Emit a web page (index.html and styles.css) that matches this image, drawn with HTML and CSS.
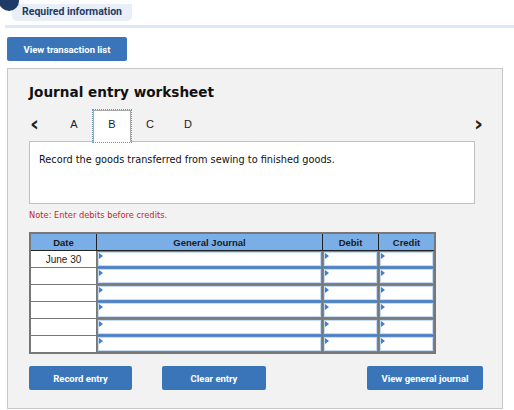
FILE: index.html
```html
<!DOCTYPE html>
<html lang="en">
<head>
    <meta charset="UTF-8">
    <title>Journal entry worksheet</title>
    <link rel="stylesheet" href="styles.css">
</head>
<body>

    <div class="req-bar">
        <span class="req-dot"></span>
        <span class="req-label">Required information</span>
    </div>
    <div class="sep"></div>

    <button class="btn btn-list">View transaction list</button>

    <div class="panel">
        <h2>Journal entry worksheet</h2>

        <!-- tabs -->
        <div class="tabs">
            <span class="arrow">&lsaquo;</span>
            <span class="tab">A</span>
            <span class="tab active">B</span>
            <span class="tab">C</span>
            <span class="tab">D</span>
            <span class="arrow next">&rsaquo;</span>
        </div>

        <div class="task-box">
            Record the goods transferred from sewing to finished goods.
        </div>

        <div class="note">Note: Enter debits before credits.</div>

        <table class="journal">
            <thead>
                <tr>
                    <th class="c-date">Date</th>
                    <th class="c-gj">General Journal</th>
                    <th class="c-dr">Debit</th>
                    <th class="c-cr">Credit</th>
                </tr>
            </thead>
            <tbody>
                <tr><td class="date">June 30</td><td><div class="inp"></div></td><td><div class="inp"></div></td><td><div class="inp"></div></td></tr>
                <tr><td class="date"></td><td><div class="inp"></div></td><td><div class="inp"></div></td><td><div class="inp"></div></td></tr>
                <tr><td class="date"></td><td><div class="inp"></div></td><td><div class="inp"></div></td><td><div class="inp"></div></td></tr>
                <tr><td class="date"></td><td><div class="inp"></div></td><td><div class="inp"></div></td><td><div class="inp"></div></td></tr>
                <tr><td class="date"></td><td><div class="inp"></div></td><td><div class="inp"></div></td><td><div class="inp"></div></td></tr>
                <tr><td class="date"></td><td><div class="inp"></div></td><td><div class="inp"></div></td><td><div class="inp"></div></td></tr>
            </tbody>
        </table>

        <div class="actions">
            <button class="btn btn-record">Record entry</button>
            <button class="btn btn-clear">Clear entry</button>
            <button class="btn btn-view">View general journal</button>
        </div>
    </div>

</body>
</html>
```

FILE: styles.css
```css
body {
    margin: 0;
    padding: 0;
    background-color: #fff;
    font-family: "DejaVu Sans", Verdana, sans-serif;
    color: #222;
    overflow: hidden;
}

/* top badge */
.req-bar {
    position: relative;
    height: 17px;
}

.req-dot {
    position: absolute;
    left: -1px;
    top: -9px;
    width: 20px;
    height: 20px;
    border-radius: 50%;
    background-color: #1d3b66;
}

.req-label {
    display: inline-block;
    margin-left: 12px;
    height: 17px;
    padding: 0 10px;
    line-height: 15px;
    background-color: #e9eff8;
    border-radius: 0 0 5px 5px;
    font-family: Roboto, sans-serif;
    font-size: 10.5px;
    font-weight: bold;
    color: #1d3b66;
}

.sep {
    margin: 8px 0 0 5px;
    height: 3px;
    background-color: #dde9f6;
}

.btn {
    display: block;
    height: 24px;
    border: none;
    border-radius: 2px;
    background-color: #3a75b9;
    color: #fff;
    font-family: Roboto, sans-serif;
    font-size: 9.5px;
    font-weight: bold;
    padding: 0;
    cursor: pointer;
}

.btn-list {
    margin: 9px 0 0 7px;
    width: 120px;
}

.panel {
    margin: 7px 0 0 7px;
    width: 496px;
    height: 341px;
    box-sizing: border-box;
    background-color: #f2f2f2;
    border: 1px solid #c8c8c8;
    padding: 15px 0 0 21px;
}

.panel h2 {
    margin: 0;
    font-size: 13.6px;
    line-height: 17px;
    font-weight: bold;
    color: #111;
}

.tabs {
    display: flex;
    align-items: stretch;
    height: 32px;
    margin-top: 9px;
    width: 456px;
}

.arrow {
    width: 26px;
    font-size: 22px;
    font-weight: bold;
    line-height: 27px;
    padding-left: 1px;
    box-sizing: border-box;
}

.arrow.next {
    margin-left: auto;
    width: 12px;
}

.tab {
    width: 38px;
    text-align: center;
    font-family: "Liberation Sans", Arial, sans-serif;
    font-size: 11px;
    line-height: 28px;
    box-sizing: border-box;
}

.tab.active {
    position: relative;
    z-index: 1;
    background-color: #fff;
    border: 1px solid #a9a9a9;
    border-bottom: none;
    outline: 1px dotted #6b96d0;
    height: 32px;
    line-height: 27px;
}

.task-box {
    margin-top: -1px;
    width: 446px;
    height: 63px;
    box-sizing: border-box;
    background-color: #fff;
    border: 1px solid #c0c0c0;
    padding: 12px 0 0 9px;
    font-size: 9.75px;
    line-height: 12px;
    color: #111;
}

.note {
    margin-top: 6px;
    font-size: 8.3px;
    line-height: 11px;
    color: #c8262d;
}

.journal {
    margin-top: 11px;
    border-collapse: collapse;
    width: 407px;
    font-family: "Liberation Sans", Arial, sans-serif;
    font-size: 10px;
    border: 2px solid #777;
}

.journal th {
    height: 16px;
    padding: 0;
    background-color: #7aaee6;
    border: 1px solid #222;
    border-top: 2px solid #777;
    font-weight: bold;
    font-size: 9.5px;
    color: #1a1a1a;
}

.journal th.c-date { width: 65px; border-left-color: #777; }
.journal th.c-gj { width: 225px; }
.journal th.c-dr { width: 55px; }
.journal th.c-cr { border-right-color: #777; }

.journal td {
    height: 16px;
    padding: 0;
    border: 1px solid #777;
    background-color: #fff;
}

.journal td.date {
    text-align: center;
}

.inp {
    position: relative;
    height: 14px;
    border: 1px solid #5a8cca;
    box-shadow: inset 0 0 0 1px #c6dbf2;
}

.inp::before {
    content: "";
    position: absolute;
    left: 1px;
    top: 1px;
    border-left: 4px solid #3f7fcf;
    border-top: 3px solid transparent;
    border-bottom: 3px solid transparent;
}

.actions {
    display: flex;
    margin-top: 12px;
}

.btn-record { width: 103px; }
.btn-clear { width: 104px; margin-left: 30px; }
.btn-view { width: 116px; margin-left: 101px; }
```
